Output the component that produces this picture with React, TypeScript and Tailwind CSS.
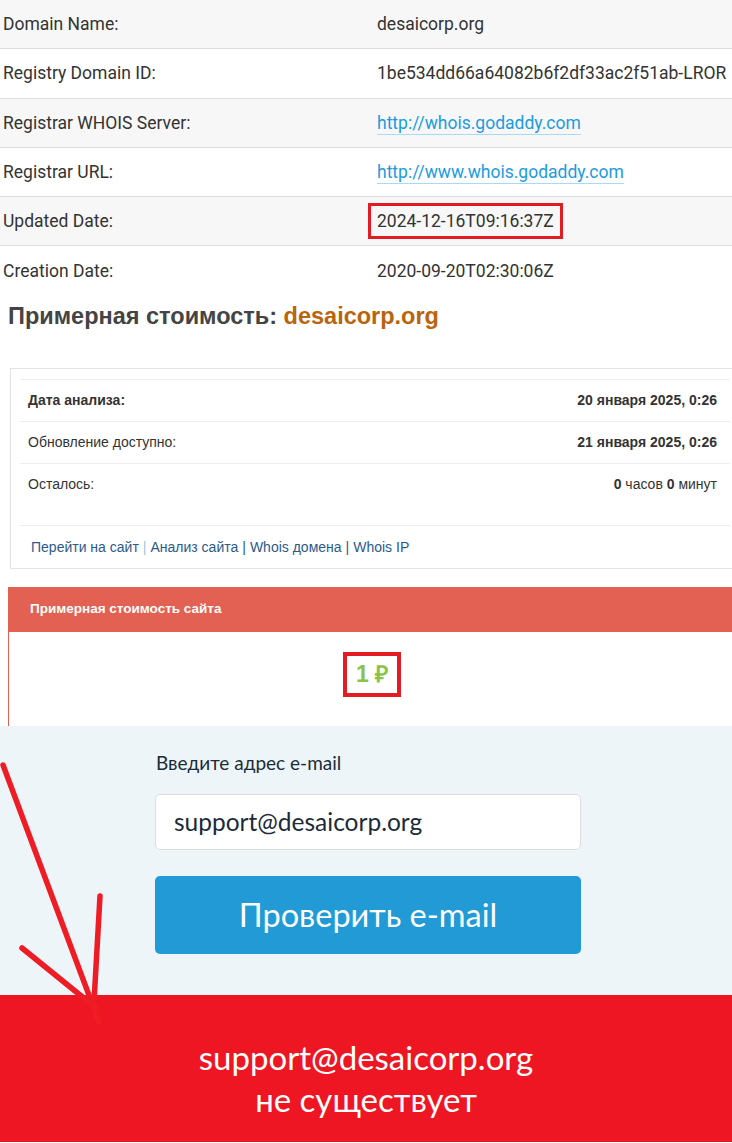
import React from "react";

type Row = { label: string; value: string; link?: boolean; mark?: boolean };

const whois: Row[] = [
  { label: "Domain Name:", value: "desaicorp.org" },
  { label: "Registry Domain ID:", value: "1be534dd66a64082b6f2df33ac2f51ab-LROR" },
  { label: "Registrar WHOIS Server:", value: "http://whois.godaddy.com", link: true },
  { label: "Registrar URL:", value: "http://www.whois.godaddy.com", link: true },
  { label: "Updated Date:", value: "2024-12-16T09:16:37Z", mark: true },
  { label: "Creation Date:", value: "2020-09-20T02:30:06Z" },
];

function WhoisTable() {
  return (
    <div className="font-['Roboto',sans-serif] text-[17.5px] text-[#333]">
      {whois.map((r, i) => (
        <div
          key={r.label}
          className={`flex h-[49.3px] items-center ${i % 2 === 0 ? "bg-[#f7f7f7]" : "bg-white"} ${i < whois.length - 1 ? "border-b border-[#ddd]" : ""}`}
        >
          <div className="w-[377px] pl-[3px]">{r.label}</div>
          <div className="flex-1 whitespace-nowrap">
            {r.link ? (
              <span className="text-[#1c9be0] border-b border-[#a9d9f3] pb-[1px]">{r.value}</span>
            ) : r.mark ? (
              <span className="-ml-[9px] inline-block border-[3px] border-[#e31b23] px-[6px] py-[2px]">{r.value}</span>
            ) : (
              r.value
            )}
          </div>
        </div>
      ))}
    </div>
  );
}

function InfoCard() {
  const rows = [
    { label: "Дата анализа:", value: <b>20 января 2025, 0:26</b>, bold: true },
    { label: "Обновление доступно:", value: <b>21 января 2025, 0:26</b> },
    {
      label: "Осталось:",
      value: (
        <>
          <b>0</b> часов <b>0</b> минут
        </>
      ),
    },
  ];
  return (
    <div className="ml-[10px] mt-[34px] w-[730px] border border-[#e3e3e3] px-[9px] pt-[10px] font-['Liberation_Sans',Arial,sans-serif] text-[14px] text-[#333]">
      <div className="border-t border-[#eee]">
        {rows.map((r, i) => (
          <div
            key={r.label}
            className={`border-b border-[#eee] ${i === 2 ? "pb-[20px]" : ""}`}
          >
            <div className="flex h-[41px] items-center pl-[8px] pr-[13px]">
              <div className={`flex-1 ${r.bold ? "font-bold" : ""}`}>{r.label}</div>
              <div>{r.value}</div>
            </div>
          </div>
        ))}
      </div>
      <div className="flex h-[42px] items-center pl-[11px] text-[#2c5a8c]">
        <span>Перейти на сайт</span>
        <span className="mx-[4px] text-[#9cc4e4]">|</span>
        <span>Анализ сайта</span>
        <span className="mx-[4px]">|</span>
        <span>Whois домена</span>
        <span className="mx-[4px]">|</span>
        <span>Whois IP</span>
      </div>
    </div>
  );
}

function PriceCard() {
  return (
    <div className="ml-[8px] mt-[18px] font-['Liberation_Sans',Arial,sans-serif]">
      <div className="flex h-[45px] items-center bg-[#e26152] pl-[22px] text-[13.5px] font-bold text-white">
        Примерная стоимость сайта
      </div>
      <div className="flex h-[94px] justify-center border-l border-[#e26152] bg-white pt-[20px]">
        <span className="ml-[3px] inline-flex h-[45px] items-center border-[4px] border-[#e31b23] px-[9px] text-[23px] font-bold text-[#8bc34a]">
          1 ₽
        </span>
      </div>
    </div>
  );
}

function EmailCheck() {
  return (
    <div className="bg-[#eef5f9] pt-[24px] pb-[41px] font-['Lato',sans-serif]">
      <div className="ml-[155px] w-[426px]">
        <div className="pl-[1px] text-[19px] leading-[26px] text-[#1b2b3a]">Введите адрес e-mail</div>
        <div className="mt-[18px] flex h-[56px] items-center rounded-[5px] border border-[#dcdcdc] bg-white pl-[18px] text-[24.5px] text-[#1b2b3a]">
          support@desaicorp.org
        </div>
        <div className="mt-[26px] flex h-[78px] items-center justify-center rounded-[5px] bg-[#229ad6] text-[32.5px] text-white">
          Проверить e-mail
        </div>
      </div>
    </div>
  );
}

function Result() {
  return (
    <div className="flex h-[147px] flex-col items-center justify-center bg-[#ee1623] pt-[18px] font-['Lato',sans-serif] text-[33px] leading-[42px] text-white">
      <div>support@desaicorp.org</div>
      <div>не существует</div>
    </div>
  );
}

export default function App() {
  return (
    <div className="relative w-[732px] overflow-hidden bg-white">
      <WhoisTable />
      <h2 className="mt-[3px] pl-[8px] font-['Liberation_Sans',Arial,sans-serif] text-[23.5px] font-bold text-[#444]">
        Примерная стоимость: <span className="text-[#b9650f]">desaicorp.org</span>
      </h2>
      <InfoCard />
      <PriceCard />
      <EmailCheck />
      <Result />
      {/* hand drawn arrow on top */}
      <svg className="pointer-events-none absolute left-0 top-[740px]" width="140" height="300" viewBox="0 0 140 300">
        <g stroke="#ee1c25" strokeWidth="5.5" strokeLinecap="round" fill="none">
          <path d="M3 25 L99 282" />
          <path d="M100 156 L94 262" />
          <path d="M22 208 L96 268" />
        </g>
      </svg>
    </div>
  );
}
